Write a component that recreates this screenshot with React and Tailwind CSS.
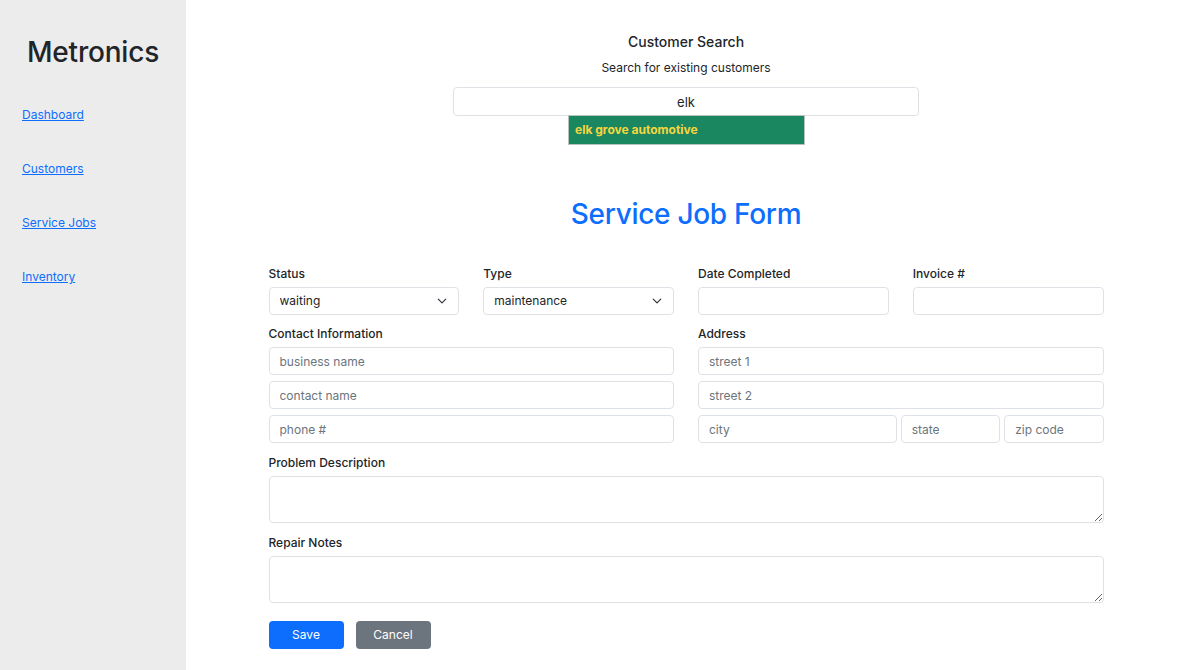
import { useState } from 'react';

const navLinks = ['Dashboard', 'Customers', 'Service Jobs', 'Inventory'];

function Chevron() {
  return (
    <svg width="10" height="10" viewBox="0 0 16 16" className="pointer-events-none absolute right-[12px] top-1/2 -translate-y-1/2">
      <path d="M2 5l6 6 6-6" fill="none" stroke="#343a40" strokeWidth="2" strokeLinecap="round" strokeLinejoin="round" />
    </svg>
  );
}

const inputCls = 'block w-full h-[28px] rounded-[4px] border border-[#dee2e6] bg-white px-[10px] text-[12px] text-[#212529] placeholder:text-[#6c757d] outline-none';
const labelCls = 'block text-[12px] font-medium text-[#212529] leading-[16px] mb-[5px]';
const areaCls = 'block h-[47px] w-full rounded-[4px] border border-[#dee2e6] px-[10px] py-[6px] text-[12px] outline-none';

function Select({ value, options }) {
  return (
    <div className="relative">
      <select defaultValue={value} className={`${inputCls} appearance-none`}>
        {options.map(o => <option key={o}>{o}</option>)}
      </select>
      <Chevron />
    </div>
  );
}

export default function App() {
  const [query, setQuery] = useState('elk');

  return (
    <div className="flex min-h-[670px] font-['Inter','Noto_Sans',sans-serif] text-[#212529]">
      {/* Sidebar */}
      <aside className="w-[186px] shrink-0 bg-[#ececec]">
        <h1 className="mt-[35px] text-center text-[28px] leading-[34px] font-medium tracking-[-0.2px]">Metronics</h1>
        <nav className="mt-[38px] flex flex-col gap-[38px] pl-[22px]">
          {navLinks.map(l => (
            <a key={l} href="#" className="text-[12px] leading-[16px] text-[#0d6efd] underline">{l}</a>
          ))}
        </nav>
      </aside>

      {/* Main */}
      <main className="flex-1 bg-white">
        <section className="flex flex-col items-center pt-[32px]">
          <h2 className="text-[14px] leading-[20px] font-medium">Customer Search</h2>
          <p className="mt-[8px] text-[12px] leading-[16px]">Search for existing customers</p>
          <div className="relative mt-[11px] w-[466px]">
            <input
              value={query}
              onChange={e => setQuery(e.target.value)}
              className="block h-[29px] w-full rounded-[4px] border border-[#dee2e6] bg-white text-center text-[13px] outline-none"
            />
            <div className="absolute left-[115px] top-[28px] w-[237px] h-[30px] border border-[#b5c3bc] bg-[#1a8760] px-[6px] flex items-center text-[12px] font-bold text-[#f5d63f]">
              elk grove automotive
            </div>
          </div>
        </section>

        <h2 className="mt-[81px] text-center text-[28px] leading-[34px] font-medium text-[#0d6efd] tracking-[-0.3px]">Service Job Form</h2>

        <form className="mx-auto mt-[35px] w-[835px]" onSubmit={e => e.preventDefault()}>
          <div className="grid grid-cols-4 gap-x-[24px]">
            <div>
              <label className={labelCls}>Status</label>
              <Select value="waiting" options={['waiting', 'in progress', 'complete']} />
            </div>
            <div>
              <label className={labelCls}>Type</label>
              <Select value="maintenance" options={['maintenance', 'repair', 'install']} />
            </div>
            <div>
              <label className={labelCls}>Date Completed</label>
              <input className={inputCls} />
            </div>
            <div>
              <label className={labelCls}>Invoice #</label>
              <input className={inputCls} />
            </div>
          </div>

          <div className="mt-[11px] grid grid-cols-2 gap-x-[24px]">
            <div>
              <label className={labelCls}>Contact Information</label>
              <div className="flex flex-col gap-[6px]">
                <input className={inputCls} placeholder="business name" />
                <input className={inputCls} placeholder="contact name" />
                <input className={inputCls} placeholder="phone #" />
              </div>
            </div>
            <div>
              <label className={labelCls}>Address</label>
              <div className="flex flex-col gap-[6px]">
                <input className={inputCls} placeholder="street 1" />
                <input className={inputCls} placeholder="street 2" />
                <div className="grid grid-cols-[2fr_1fr_1fr] gap-x-[4px]">
                  <input className={inputCls} placeholder="city" />
                  <input className={inputCls} placeholder="state" />
                  <input className={inputCls} placeholder="zip code" />
                </div>
              </div>
            </div>
          </div>

          <div className="mt-[12px]">
            <label className={labelCls}>Problem Description</label>
            <textarea className={areaCls} />
          </div>

          <div className="mt-[12px]">
            <label className={labelCls}>Repair Notes</label>
            <textarea className={areaCls} />
          </div>

          <div className="mt-[18px] flex gap-[12px]">
            <button type="submit" className="h-[28px] w-[75px] rounded-[4px] bg-[#0d6efd] text-[12px] text-white">Save</button>
            <button type="button" className="h-[28px] w-[75px] rounded-[4px] bg-[#6c757d] text-[12px] text-white">Cancel</button>
          </div>
        </form>
      </main>
    </div>
  );
}
